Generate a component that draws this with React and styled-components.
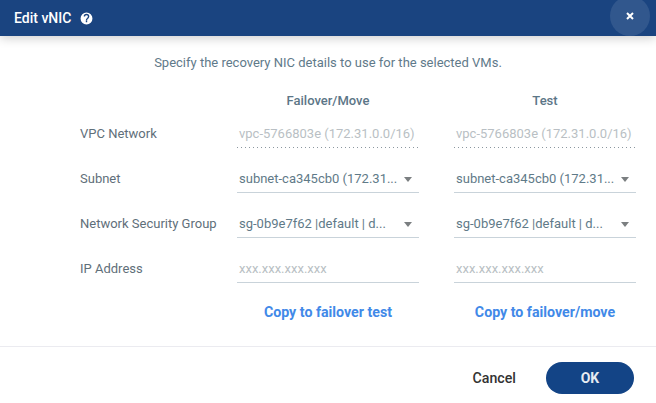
import React from "react";
import styled, { createGlobalStyle } from "styled-components";

const GlobalStyle = createGlobalStyle`
  html, body {
    margin: 0;
    padding: 0;
    background: #fff;
    font-family: Roboto, "Liberation Sans", sans-serif;
  }
`;

const Dialog = styled.div`
  width: 656px;
  height: 403px;
  display: flex;
  flex-direction: column;
  background: #fff;
  overflow: hidden;
`;

const Header = styled.header`
  position: relative;
  height: 36px;
  flex-shrink: 0;
  display: flex;
  align-items: center;
  padding-left: 14px;
  column-gap: 9px;
  background: #1a4480;
  box-shadow: 0 2px 10px rgba(0, 0, 0, 0.2);
  overflow: hidden;
  z-index: 2;
`;

const Title = styled.h1`
  margin: 0;
  font-size: 14px;
  font-weight: 500;
  color: #fff;
`;

const CloseButton = styled.button`
  position: absolute;
  right: 6px;
  top: -4px;
  width: 40px;
  height: 40px;
  padding: 0;
  border: 0;
  border-radius: 50%;
  display: flex;
  align-items: center;
  justify-content: center;
  background: rgba(255, 255, 255, 0.1);
`;

const Body = styled.main`
  flex: 1;
  display: flex;
  flex-direction: column;
  padding-top: 19px;
`;

const Intro = styled.p`
  margin: 0;
  font-size: 13px;
  line-height: 16px;
  text-align: center;
  color: #5f7a8a;
`;

const FormGrid = styled.div`
  display: grid;
  grid-template-columns: 122px 182px 182px;
  column-gap: 35px;
  padding-left: 80px;
`;

const HeadRow = styled(FormGrid)`
  grid-auto-rows: 24px;
  padding-top: 18px;
`;

const RowsGrid = styled(FormGrid)`
  grid-auto-rows: 45px;
  margin-top: -10px;
`;

const ColumnHead = styled.div`
  font-size: 13px;
  font-weight: 500;
  line-height: 24px;
  text-align: center;
  color: #5c7687;
`;

const Label = styled.div`
  display: flex;
  align-items: flex-end;
  padding-bottom: 6px;
  font-size: 13px;
  line-height: 16px;
  white-space: nowrap;
  color: #5f6f7a;
`;

const Field = styled.div`
  box-sizing: border-box;
  display: flex;
  align-items: flex-end;
  justify-content: space-between;
  padding: 0 3px 6px 2px;
  font-size: 13px;
  line-height: 16px;
  white-space: nowrap;
  color: ${(props) => (props.$muted ? "#b9bfc4" : "#5f7a88")};
  background: ${(props) =>
    props.$dotted
      ? "linear-gradient(to right, #8b979f 1px, transparent 1px) left bottom / 4px 1px repeat-x"
      : "linear-gradient(#c9d3da, #c9d3da) left bottom / 100% 1px no-repeat"};
`;

const Caret = styled.span`
  width: 0;
  height: 0;
  margin: 0 4px 5px 0;
  border-left: 4.5px solid transparent;
  border-right: 4.5px solid transparent;
  border-top: 5px solid #7b7f81;
`;

const CopyRow = styled.div`
  display: grid;
  grid-template-columns: 182px 182px;
  column-gap: 35px;
  padding: 20px 0 0 237px;
`;

const CopyLink = styled.a`
  font-size: 14.2px;
  font-weight: 700;
  line-height: 18px;
  text-align: center;
  color: #4189e8;
`;

const Footer = styled.footer`
  box-sizing: border-box;
  height: 57px;
  flex-shrink: 0;
  display: flex;
  align-items: flex-start;
  justify-content: flex-end;
  padding: 15px 22px 0 0;
  column-gap: 30px;
  border-top: 1px solid #ebebf0;
`;

const CancelButton = styled.button`
  height: 32px;
  padding: 0;
  border: 0;
  background: none;
  font-family: inherit;
  font-size: 14.2px;
  font-weight: 500;
  color: #333;
`;

const OkButton = styled.button`
  width: 88px;
  height: 32px;
  padding: 0;
  border: 0;
  border-radius: 16px;
  background: #134486;
  font-family: inherit;
  font-size: 14px;
  font-weight: 700;
  color: #e6ebf2;
`;

const rows = [
  {
    label: "VPC Network",
    value: "vpc-5766803e (172.31.0.0/16)",
    muted: true,
    dotted: true,
  },
  { label: "Subnet", value: "subnet-ca345cb0 (172.31...", select: true },
  {
    label: "Network Security Group",
    value: "sg-0b9e7f62 |default | d...",
    select: true,
  },
  { label: "IP Address", value: "xxx.xxx.xxx.xxx", muted: true },
];

const HelpIcon = () => (
  <svg width="13" height="13" viewBox="0 0 24 24" fill="#fff">
    <path d="M12 1a11 11 0 1 0 0 22 11 11 0 0 0 0-22zm1.3 18h-2.6v-2.6h2.6V19zm2.6-7.6-1.1 1.2c-.9.9-1.5 1.6-1.5 3.4h-2.6v-.6c0-1.4.6-2.7 1.5-3.6l1.6-1.6c.5-.5.8-1.1.8-1.8a2.6 2.6 0 0 0-5.2 0H6.8a5.2 5.2 0 0 1 10.4 0c0 1.1-.5 2.2-1.3 3z" />
  </svg>
);

const CloseIcon = () => (
  <svg width="8" height="8" viewBox="0 0 8 8">
    <path d="M1 1l6 6M7 1L1 7" stroke="#fff" strokeWidth="2" fill="none" />
  </svg>
);

const FieldCell = ({ row }) => (
  <Field $muted={row.muted} $dotted={row.dotted}>
    <span>{row.value}</span>
    {row.select && <Caret />}
  </Field>
);

const App = () => {
  return (
    <Dialog>
      <GlobalStyle />
      <Header>
        <Title>Edit vNIC</Title>
        <HelpIcon />
        <CloseButton aria-label="Close">
          <CloseIcon />
        </CloseButton>
      </Header>
      <Body>
        <Intro>Specify the recovery NIC details to use for the selected VMs.</Intro>
        <HeadRow>
          <div />
          <ColumnHead>Failover/Move</ColumnHead>
          <ColumnHead>Test</ColumnHead>
        </HeadRow>
        <RowsGrid>
          {rows.map((row) => (
            <React.Fragment key={row.label}>
              <Label>{row.label}</Label>
              <FieldCell row={row} />
              <FieldCell row={row} />
            </React.Fragment>
          ))}
        </RowsGrid>
        <CopyRow>
          <CopyLink>Copy to failover test</CopyLink>
          <CopyLink>Copy to failover/move</CopyLink>
        </CopyRow>
      </Body>
      <Footer>
        <CancelButton>Cancel</CancelButton>
        <OkButton>OK</OkButton>
      </Footer>
    </Dialog>
  );
};

export default App;
